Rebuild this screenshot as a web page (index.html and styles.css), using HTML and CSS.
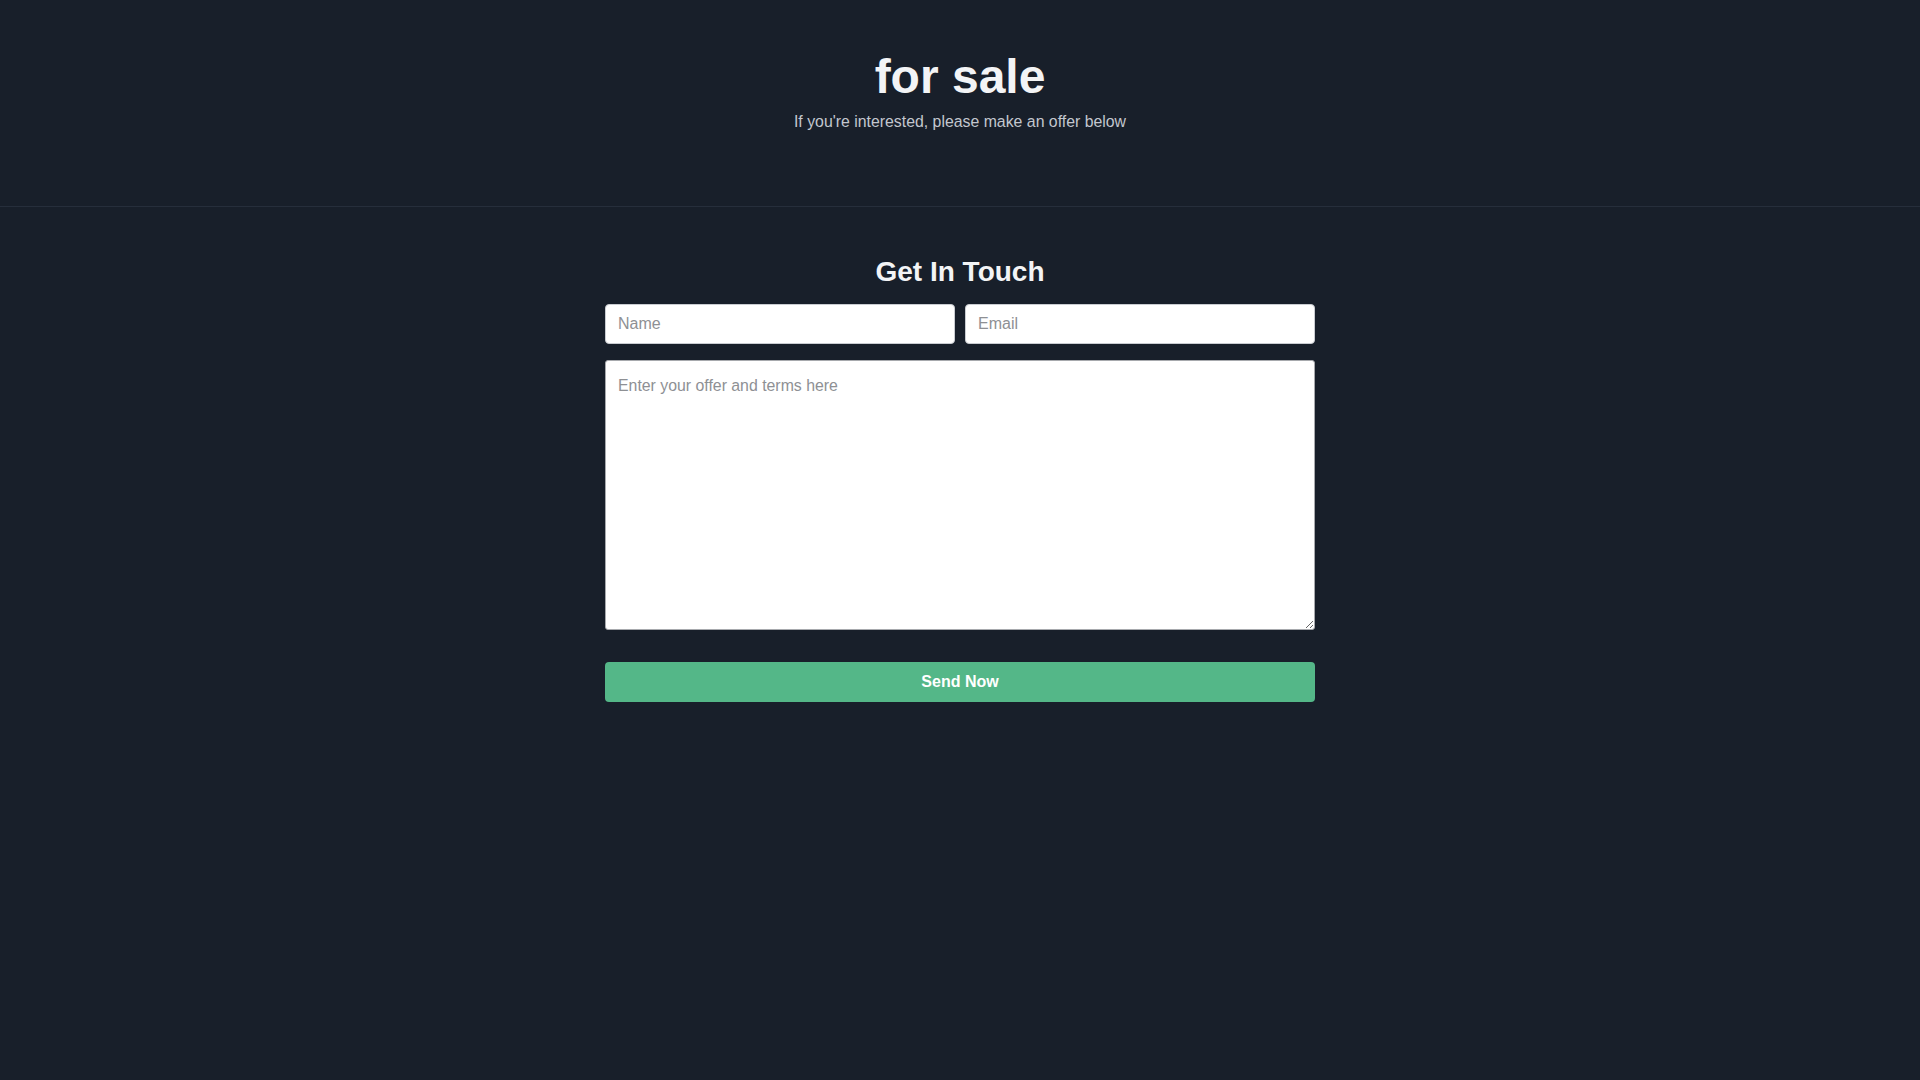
FILE: index.html
```html
<!DOCTYPE html>
<html lang="en">
<head>
<meta charset="utf-8">
<title>for sale</title>
<link rel="stylesheet" href="styles.css">
</head>
<body>
<header class="hero">
  <h1 class="hero-title">for sale</h1>
  <p class="hero-sub">If you're interested, please make an offer below</p>
</header>
<main class="contact">
  <h2 class="contact-title">Get In Touch</h2>
  <form class="contact-form">
    <div class="row">
      <input class="field" type="text" placeholder="Name">
      <input class="field" type="email" placeholder="Email">
    </div>
    <textarea class="field area" placeholder="Enter your offer and terms here"></textarea>
    <button class="send" type="button">Send Now</button>
  </form>
</main>
</body>
</html>
```

FILE: styles.css
```css
* { box-sizing: border-box; }
html, body {
  margin: 0;
  padding: 0;
  background: #181f2a;
  font-family: "Liberation Sans", Arial, sans-serif;
  color: #f3f4f6;
  min-height: 100%;
}
body { min-height: 1080px; }
.hero {
  text-align: center;
  padding: 48px 16px 72px;
  border-bottom: 1px solid #262e3b;
}
.hero-title {
  margin: 0;
  font-size: 48px;
  line-height: 1.2;
  font-weight: 700;
  color: #f3f4f6;
}
.hero-sub {
  margin: 4px 0 0;
  font-size: 15.85px;
  line-height: 24px;
  color: #c3c7cf;
}
.contact {
  width: 710px;
  margin: 0 auto;
  padding-top: 48px;
}
.contact-title {
  margin: 0 0 16px;
  text-align: center;
  font-size: 28px;
  line-height: 1.2;
  font-weight: 700;
  color: #f3f4f6;
}
.contact-form {
  display: flex;
  flex-direction: column;
}
.row {
  display: grid;
  grid-template-columns: 1fr 1fr;
  gap: 10px;
  margin-bottom: 16px;
}
.field {
  display: block;
  width: 100%;
  height: 40px;
  padding: 7px 12px;
  border: 1px solid #c9ccd1;
  border-radius: 4px;
  background: #ffffff;
  font-family: "Liberation Sans", Arial, sans-serif;
  font-size: 16px;
  line-height: 24px;
  color: #333;
  outline: none;
}
.field::placeholder { color: #8e9094; }
.area {
  height: 270px;
  padding: 13px 12px 12px;
  border-radius: 3px;
  border-color: #a7a9ad;
  font-size: 15.85px;
  resize: vertical;
  margin-bottom: 32px;
}
.send {
  height: 40px;
  width: 100%;
  border: none;
  border-radius: 4px;
  background: #54b788;
  color: #ffffff;
  font-family: "Liberation Sans", Arial, sans-serif;
  font-size: 16px;
  font-weight: 700;
  cursor: pointer;
}
```
